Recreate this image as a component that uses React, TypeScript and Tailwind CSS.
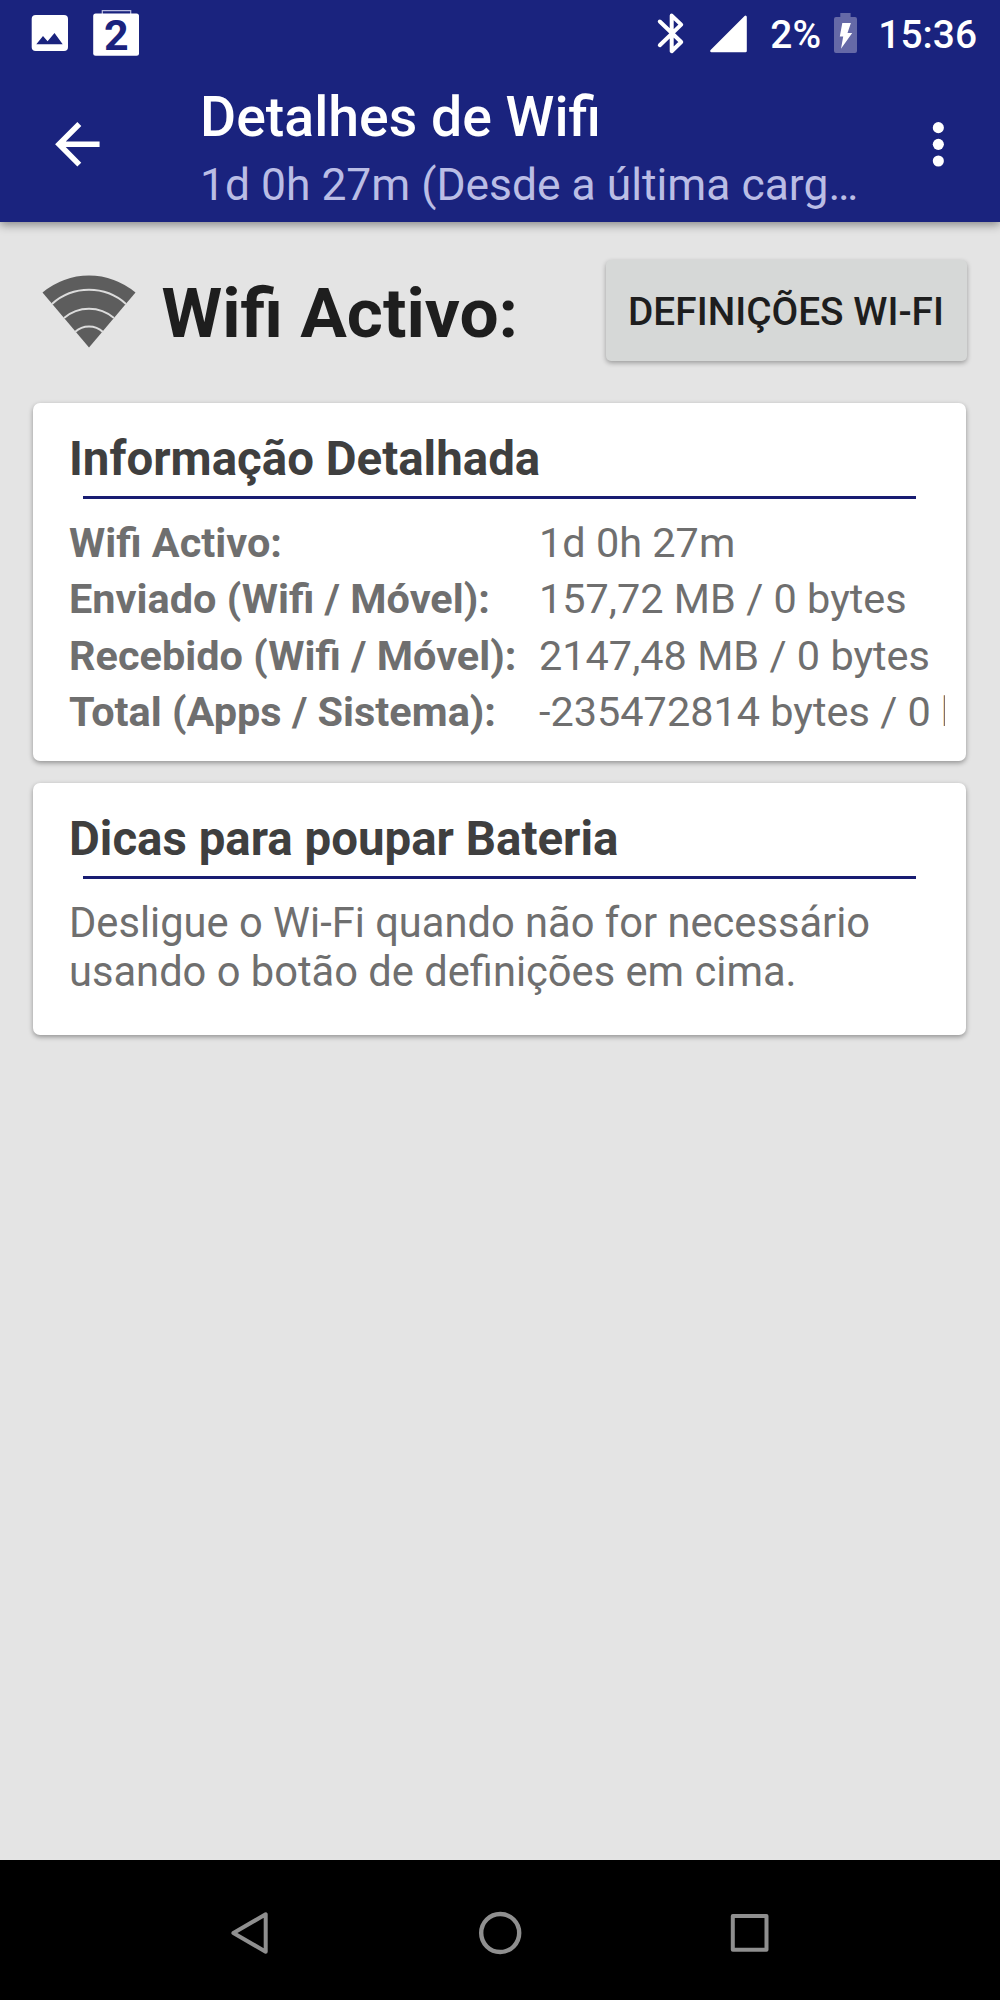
import { ReactNode } from "react";

const detalhes = [
  { label: "Wifi Activo:", value: "1d 0h 27m" },
  { label: "Enviado (Wifi / Móvel):", value: "157,72 MB / 0 bytes" },
  { label: "Recebido (Wifi / Móvel):", value: "2147,48 MB / 0 bytes" },
  { label: "Total (Apps / Sistema):", value: "-235472814 bytes / 0 bytes" },
];

const StatusBar = () => (
  <div className="h-[67px] flex items-start justify-between text-white">
    <div className="flex pl-[31px]">
      <svg width="38" height="67" viewBox="31 0 38 67">
        <rect x="31.7" y="15" width="36.3" height="36" rx="4" fill="#fff" />
        <path d="M36.3 44.3 43 36l4.6 5.2L54.5 33l8.2 11.3z" fill="#1a237e" />
      </svg>
      <div className="relative ml-[23px] w-[48px] h-[67px]">
        <svg width="48" height="67" viewBox="92 0 48 67">
          <path d="M102.3 14v-3.3h28.4V14" fill="none" stroke="#b9bce0" strokeWidth="1.2" />
          <rect x="93.2" y="13.5" width="45.8" height="42.3" rx="2.5" fill="#fff" />
        </svg>
        <span className="absolute left-[12px] top-[10px] text-[43px] leading-[50px] font-bold text-[#1a237e]">2</span>
      </div>
    </div>

    <div className="flex pr-[23px] text-[38.9px] leading-[69px] font-medium">
      <svg width="30" height="67" viewBox="656 0 30 67">
        <path
          d="M659.8 21.5 681.2 42 671.7 51.2V15.6l9.5 9L659.8 45.2"
          fill="none"
          stroke="#fff"
          strokeWidth="4"
          strokeLinecap="round"
          strokeLinejoin="round"
        />
      </svg>
      <svg className="ml-[22px]" width="40" height="67" viewBox="708 0 40 67">
        <path d="M711.5 51 745.5 17v34z" fill="#fff" stroke="#fff" strokeWidth="2.6" strokeLinejoin="round" />
      </svg>
      <span className="ml-[22px] w-[62px] whitespace-nowrap">2%</span>
      <svg width="26" height="67" viewBox="832 0 26 67">
        <path
          d="M840.3 13h10.3v4H855a2 2 0 0 1 2 2v32a2 2 0 0 1-2 2h-19a2 2 0 0 1-2-2V19a2 2 0 0 1 2-2h4.3z"
          fill="#6569a7"
        />
        <path d="M842.3 23h8.6l-3.4 10h4.7l-11.2 15.7 2.2-12.2h-3.4z" fill="#fff" />
      </svg>
      <span className="ml-[20px]">15:36</span>
    </div>
  </div>
);

const Header = () => (
  <header className="relative h-[222px] bg-[#1a237e] shadow-[0_3px_9px_rgba(0,0,0,0.4)]">
    <StatusBar />
    <div className="h-[155px] flex">
      <button className="ml-[44px] w-[67px] flex items-center justify-center">
        <svg width="66.7" height="66.7" viewBox="0 0 24 24" fill="#fff">
          <path d="M20 11H7.83l5.59-5.59L12 4l-8 8 8 8 1.41-1.41L7.83 13H20v-2z" />
        </svg>
      </button>
      <div className="ml-[89px] w-[664px] pt-[18px]">
        <h1 className="text-[55.4px] leading-[66px] font-medium text-white">Detalhes de Wifi</h1>
        <p className="mt-[8px] text-[44.4px] leading-[52px] text-[#babde5] truncate">
          1d 0h 27m (Desde a última carga completa)
        </p>
      </div>
      <button className="ml-[41px] w-[67px] flex items-center justify-center">
        <svg width="66.7" height="66.7" viewBox="0 0 24 24" fill="#fff">
          <circle cx="12" cy="6" r="2" />
          <circle cx="12" cy="12" r="2" />
          <circle cx="12" cy="18" r="2" />
        </svg>
      </button>
    </div>
  </header>
);

const WifiIcon = () => (
  <svg width="94" height="75" viewBox="41.5 273 94 75">
    <path d="M88.5 347.5 42 292.5A72.5 72.5 0 0 1 135 292.5z" fill="#5d5d5d" />
    <g fill="none" stroke="#dcdcdc" strokeWidth="2">
      <path d="M51.5 304A55.5 55.5 0 0 1 125.5 304" />
      <path d="M63.5 318A38.3 38.3 0 0 1 113.5 318" />
      <path d="M74.5 332A20.5 20.5 0 0 1 102.5 332" />
    </g>
  </svg>
);

const Card = ({ title, className, children }: { title: string; className: string; children: ReactNode }) => (
  <section className={`ml-[33px] mr-[34px] rounded-[7px] bg-white pl-[36px] shadow-[0_2px_5px_rgba(0,0,0,0.36)] ${className}`}>
    <h2 className="pt-[28px] text-[47.45px] leading-[56px] font-bold text-[#3f3f3f]">{title}</h2>
    <div className="mt-[9px] ml-[14px] mr-[50px] h-[3px] bg-[#181c72]" />
    {children}
  </section>
);

export default function App() {
  return (
    <div className="w-[1000px] h-[2000px] flex flex-col overflow-hidden bg-[#e4e4e4] font-[Roboto,sans-serif]">
      <Header />

      <main className="flex-1">
        <div className="h-[180.5px] flex pl-[41.5px] pr-[33.5px]">
          <div className="pt-[51px]">
            <WifiIcon />
          </div>
          <span className="ml-[26px] pt-[51px] text-[69.4px] leading-[82px] font-bold text-[#1e1e1e]">
            Wifi Activo:
          </span>
          <button className="ml-auto mt-[38px] pt-[3px] w-[361px] h-[101px] rounded-[5px] bg-[#d6d8d7] text-[38.8px] font-medium text-[#1e1e1e] whitespace-nowrap shadow-[0_2px_5px_rgba(0,0,0,0.32)]">
            DEFINIÇÕES WI-FI
          </button>
        </div>

        <Card title="Informação Detalhada" className="h-[358px]">
          <div className="mt-[16.5px] mr-[21px] grid grid-cols-[470px_1fr] text-[41.45px] leading-[56.4px] text-[#6f6f6f]">
            {detalhes.map((d) => (
              <div key={d.label} className="contents">
                <span className="font-bold whitespace-nowrap">{d.label}</span>
                <span className="min-w-0 overflow-hidden whitespace-nowrap">{d.value}</span>
              </div>
            ))}
          </div>
        </Card>

        <Card title="Dicas para poupar Bateria" className="mt-[22px] h-[252px]">
          <p className="mt-[19px] text-[41.67px] leading-[49px] text-[#6f6f6f]">
            Desligue o Wi-Fi quando não for necessário
            <br />
            usando o botão de definições em cima.
          </p>
        </Card>
      </main>

      <nav className="h-[140px] flex justify-between bg-black px-[229px]">
        <svg width="42" height="140" viewBox="229 1860 42 140">
          <path d="M233.4 1933 265.7 1914.3v37.4z" fill="none" stroke="#8f8f8f" strokeWidth="4" strokeLinejoin="round" />
        </svg>
        <svg width="46" height="140" viewBox="476.5 1860 46 140">
          <circle cx="499.7" cy="1933" r="19" fill="none" stroke="#8f8f8f" strokeWidth="4.4" />
        </svg>
        <svg width="42" height="140" viewBox="729 1860 42 140">
          <rect x="732.8" y="1916" width="33.7" height="33.7" fill="none" stroke="#8f8f8f" strokeWidth="4" strokeLinejoin="round" />
        </svg>
      </nav>
    </div>
  );
}
